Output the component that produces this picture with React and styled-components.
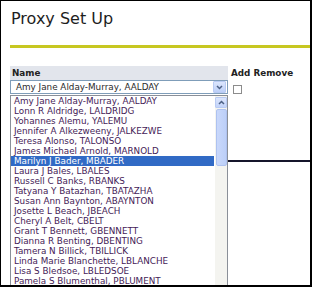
import React from "react";
import styled, { createGlobalStyle } from "styled-components";

const Global = createGlobalStyle`
  html, body { margin: 0; padding: 0; background: #fff; }
`;

const Frame = styled.div`
  width: 312px;
  height: 287px;
  box-sizing: border-box;
  border: 1px solid #000;
  border-right-width: 2px;
  border-bottom-width: 2px;
  background: #fff;
  overflow: hidden;
  font-family: "DejaVu Sans", Verdana, sans-serif;
`;

const Title = styled.h1`
  margin: 0;
  padding: 10px 0 0 10px;
  font-size: 16px;
  line-height: 16px;
  font-weight: normal;
  color: #1e1e1e;
`;

const Rule = styled.div`
  margin: 18px 0 0 9px;
  height: 3px;
  background: #c7c721;
`;

const Table = styled.div`
  margin-top: 18px;
  padding-left: 9px;
  display: grid;
  grid-template-columns: 218px auto;
  column-gap: 3px;
  font-size: 8.8px;
`;

const HeaderCell = styled.div`
  height: 14px;
  line-height: 14px;
  font-weight: bold;
  color: #222;
  padding-left: ${(p) => (p.$shaded ? "2px" : "0")};
  background: ${(p) => (p.$shaded ? "#e2e5ec" : "transparent")};
`;

const SelectWrap = styled.div`
  position: relative;
  height: 14px;
`;

const SelectBox = styled.div`
  box-sizing: border-box;
  height: 14px;
  border: 1px solid #7f9db9;
  display: flex;
  align-items: center;
  padding-left: 5px;
  color: #2a2a2a;
`;

const SelectText = styled.span`
  flex: 1;
  white-space: nowrap;
`;

const DropButton = styled.div`
  width: 11px;
  height: 10px;
  margin-right: 1px;
  border: 1px solid #b9cbf3;
  border-radius: 1px;
  background: linear-gradient(#dce6fd, #bccff8);
  display: flex;
  align-items: center;
  justify-content: center;
`;

const CheckCell = styled.div`
  padding: 5px 0 0 2px;
`;

const CheckBox = styled.div`
  width: 9px;
  height: 9px;
  box-sizing: border-box;
  border: 1px solid #8c8c8c;
  background: #fff;
`;

const Spacer = styled.div`
  grid-column: 1 / -1;
  height: 66px;
  border-bottom: 2px solid #15152b;
`;

const ListBox = styled.div`
  position: absolute;
  top: calc(100% + 1px);
  left: 0;
  width: 218px;
  height: 200px;
  box-sizing: border-box;
  border: 1px solid #8a8f98;
  background: #fff;
  display: flex;
  z-index: 2;
`;

const Items = styled.div`
  flex: 1;
`;

const Item = styled.div`
  height: 10px;
  line-height: 10px;
  margin-right: 1px;
  padding-left: 3px;
  white-space: nowrap;
  color: ${(p) => (p.$selected ? "#fff" : "#451b57")};
  background: ${(p) => (p.$selected ? "#316ac5" : "transparent")};
`;

const Scrollbar = styled.div`
  width: 12px;
  background: #f4f4f0;
  display: flex;
  flex-direction: column;
  align-items: center;
`;

const ScrollButton = styled.div`
  width: 10px;
  height: 9px;
  margin-top: 1px;
  border: 1px solid #b9cbf3;
  border-radius: 1px;
  background: linear-gradient(#dce6fd, #c2d3f9);
  display: flex;
  align-items: center;
  justify-content: center;
`;

const Thumb = styled.div`
  width: 9px;
  height: 55px;
  margin-top: 1px;
  border: 1px solid #aec2f0;
  border-radius: 2px;
  background: linear-gradient(90deg, #c9d8fb, #bccff8);
`;

const Chevron = ({ up }) => (
  <svg width="7" height="5" viewBox="0 0 7 5">
    <polyline
      points={up ? "1,4 3.5,1.5 6,4" : "1,1 3.5,3.5 6,1"}
      fill="none"
      stroke="#4d6185"
      strokeWidth="1.5"
    />
  </svg>
);

const names = [
  "Amy Jane Alday-Murray, AALDAY",
  "Lonn R Aldridge, LALDRIDG",
  "Yohannes Alemu, YALEMU",
  "Jennifer A Alkezweeny, JALKEZWE",
  "Teresa Alonso, TALONSO",
  "James Michael Arnold, MARNOLD",
  "Marilyn J Bader, MBADER",
  "Laura J Bales, LBALES",
  "Russell C Banks, RBANKS",
  "Tatyana Y Batazhan, TBATAZHA",
  "Susan Ann Baynton, ABAYNTON",
  "Josette L Beach, JBEACH",
  "Cheryl A Belt, CBELT",
  "Grant T Bennett, GBENNETT",
  "Dianna R Benting, DBENTING",
  "Tamera N Billick, TBILLICK",
  "Linda Marie Blanchette, LBLANCHE",
  "Lisa S Bledsoe, LBLEDSOE",
  "Pamela S Blumenthal, PBLUMENT",
];

export default function App() {
  return (
    <>
      <Global />
      <Frame>
        <Title>Proxy Set Up</Title>
        <Rule />
        <Table>
          <HeaderCell $shaded>Name</HeaderCell>
          <HeaderCell>Add Remove</HeaderCell>
          <SelectWrap>
            <SelectBox>
              <SelectText>Amy Jane Alday-Murray, AALDAY</SelectText>
              <DropButton>
                <Chevron />
              </DropButton>
            </SelectBox>
            <ListBox>
              <Items>
                {names.map((n, i) => (
                  <Item key={n} $selected={i === 6}>
                    {n}
                  </Item>
                ))}
              </Items>
              <Scrollbar>
                <ScrollButton>
                  <Chevron up />
                </ScrollButton>
                <Thumb />
              </Scrollbar>
            </ListBox>
          </SelectWrap>
          <CheckCell>
            <CheckBox />
          </CheckCell>
          <Spacer />
        </Table>
      </Frame>
    </>
  );
}
